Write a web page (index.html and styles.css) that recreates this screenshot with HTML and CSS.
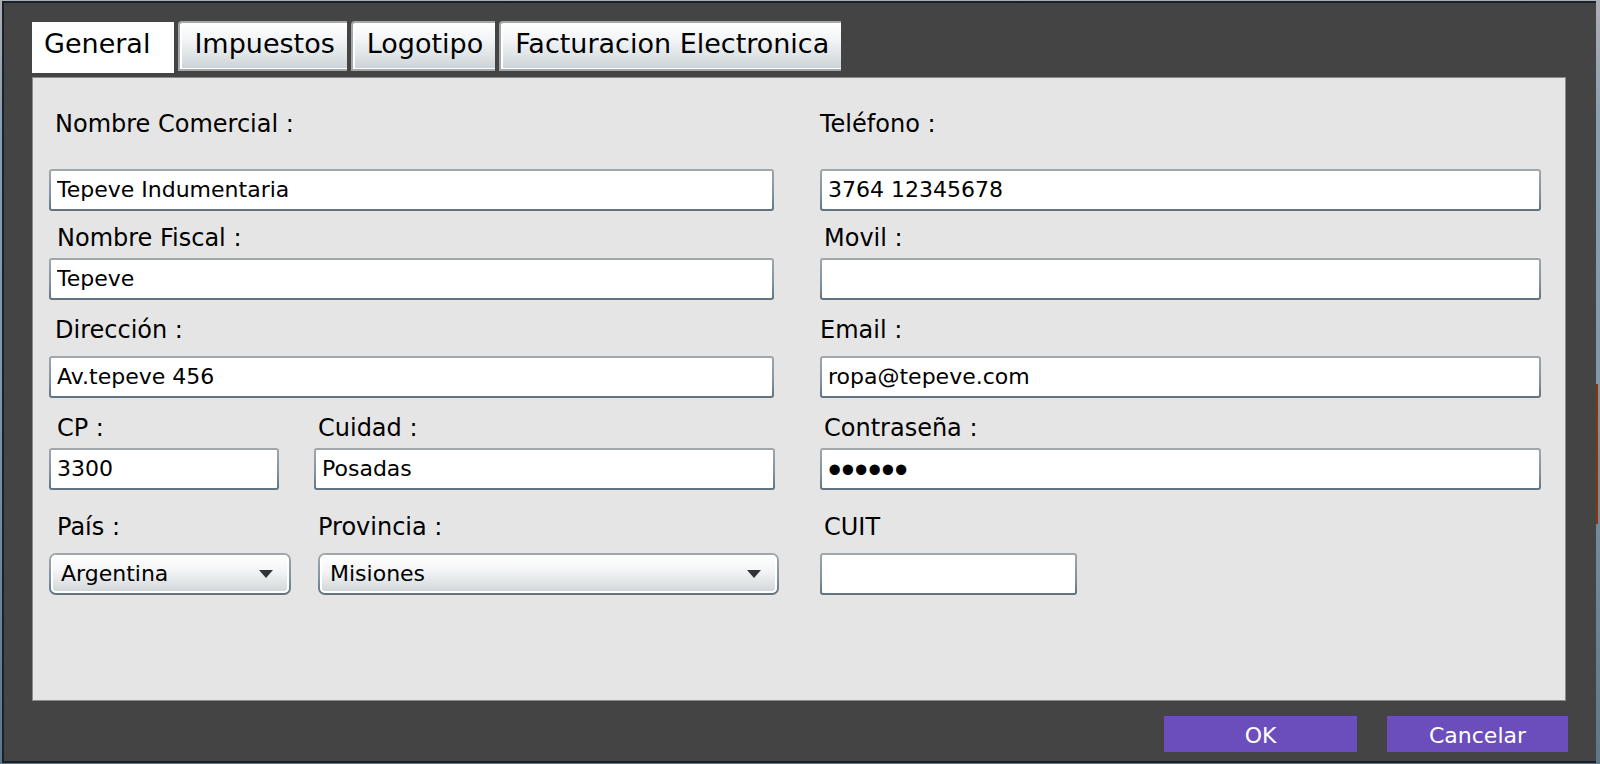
FILE: index.html
```html
<!DOCTYPE html>
<html lang="es">
<head>
<meta charset="utf-8">
<meta name="viewport" content="width=device-width, initial-scale=1">
<title>Datos de la empresa</title>
<link rel="stylesheet" href="styles.css">
</head>
<body class="desktop">
<main class="window">
  <nav class="tabs" role="tablist">
    <button class="tab tab-active" type="button" role="tab" aria-selected="true">General</button>
    <button class="tab" type="button" role="tab" aria-selected="false">Impuestos</button>
    <button class="tab" type="button" role="tab" aria-selected="false">Logotipo</button>
    <button class="tab" type="button" role="tab" aria-selected="false">Facturacion Electronica</button>
  </nav>
  <form class="form" id="company">
    <div class="row row-first">
      <div class="left single">
        <div class="field"><label class="label" for="comercial">Nombre Comercial :</label><input class="input" id="comercial" type="text" value="Tepeve Indumentaria"></div>
      </div>
      <div class="right">
        <div class="field"><label class="label" for="telefono">Teléfono :</label><input class="input" id="telefono" type="text" value="3764 12345678"></div>
      </div>
    </div>
    <div class="row row-fiscal">
      <div class="left single">
        <div class="field"><label class="label indented" for="fiscal">Nombre Fiscal :</label><input class="input" id="fiscal" type="text" value="Tepeve"></div>
      </div>
      <div class="right">
        <div class="field"><label class="label indented" for="movil">Movil :</label><input class="input" id="movil" type="text"></div>
      </div>
    </div>
    <div class="row row-address">
      <div class="left single">
        <div class="field"><label class="label" for="direccion">Dirección :</label><input class="input" id="direccion" type="text" value="Av.tepeve 456"></div>
      </div>
      <div class="right">
        <div class="field"><label class="label" for="email">Email :</label><input class="input" id="email" type="text" value="ropa@tepeve.com"></div>
      </div>
    </div>
    <div class="row row-city">
      <div class="left pair-inputs">
        <div class="field"><label class="label indented" for="cp">CP :</label><input class="input" id="cp" type="text" value="3300"></div>
        <div class="field second"><label class="label indented" for="ciudad">Cuidad :</label><input class="input" id="ciudad" type="text" value="Posadas"></div>
      </div>
      <div class="right">
        <div class="field"><label class="label indented" for="clave">Contraseña :</label><input class="input password" id="clave" type="password" value="123456"></div>
      </div>
    </div>
    <div class="row row-country">
      <div class="left pair-selects">
        <div class="field"><label class="label indented" for="pais">País :</label>
          <div class="combo"><select class="select" id="pais"><option>Argentina</option></select><svg class="arrow" viewBox="0 0 14 8" aria-hidden="true"><path d="M0 0H14L7 8Z"/></svg></div></div>
        <div class="field second"><label class="label" for="provincia">Provincia :</label>
          <div class="combo"><select class="select" id="provincia"><option>Misiones</option></select><svg class="arrow" viewBox="0 0 14 8" aria-hidden="true"><path d="M0 0H14L7 8Z"/></svg></div></div>
      </div>
      <div class="right short">
        <div class="field"><label class="label indented" for="cuit">CUIT</label><input class="input" id="cuit" type="text"></div>
      </div>
    </div>
  </form>
  <footer class="actions">
    <button class="action action-ok" type="submit" form="company">OK</button>
    <button class="action action-cancel" type="button">Cancelar</button>
  </footer>
</main>
</body>
</html>
```
FILE: styles.css
```css
* { box-sizing: border-box; }

body, button, input, select {
  font-family: Verdana, "DejaVu Sans", sans-serif;
  color: #000;
}

.desktop {
  margin: 0;
  min-height: 100vh;
  display: flex;
  padding: 1px 4px 1px 2px;
  background:
    linear-gradient(#8a3208, #8a3208) right 2px top 384px / 2px 140px no-repeat,
    linear-gradient(#b0aeb4, #8a9fb0 15%, #7f98aa 50%, #5f7686);
}

.window {
  flex: 1;
  display: flex;
  flex-direction: column;
  padding: 18px 30px 9px 28px;
  background: #444;
  border: 2px solid #17222b;
  border-right: 0;
}

.tabs {
  display: flex;
  align-items: flex-start;
  margin-bottom: 4px;
}

.tab {
  height: 50px;
  margin-right: 4px;
  padding: 0 12px 4px 14px;
  border: 2px solid #a3a8ab;
  border-right: 0;
  border-radius: 4px 0 0 0;
  background: linear-gradient(#fff, #f3f5f6 35%, #dfe4e7 70%, #cbd1d5);
  box-shadow: inset 2px 2px 0 #fff, inset 0 -1px 0 #fff;
  font-size: 27px;
  line-height: 28px;
  white-space: nowrap;
}

.tab-active {
  height: 51px;
  margin-top: 1px;
  padding: 0 24px 8px 12px;
  border: 0;
  border-radius: 0;
  background: #fff;
  box-shadow: none;
}

.form {
  flex: 1;
  padding: 32px 24px 30px 16px;
  border: 1px solid #8b8b8b;
  background: #e5e5e5;
}

.row {
  display: grid;
  grid-template-columns: 730fr 721fr;
  column-gap: 41px;
}

.row-fiscal { margin-top: 13px; }
.row-address { margin-top: 16px; }
.row-city { margin-top: 16px; }
.row-country { margin-top: 23px; }

.row-first .field { row-gap: 31px; }
.row-fiscal .field, .row-city .field { row-gap: 6px; }

.single { padding-right: 5px; }

.pair-inputs {
  display: grid;
  grid-template-columns: 230fr 461fr;
  column-gap: 35px;
  padding-right: 4px;
}

.pair-selects {
  display: grid;
  grid-template-columns: 242fr 461fr;
  column-gap: 27px;
}

.short { width: 257px; }

.field {
  display: flex;
  flex-direction: column;
  row-gap: 12px;
}

.label {
  padding-left: 6px;
  font-size: 24px;
  line-height: 28px;
  white-space: nowrap;
}

.left .indented { padding-left: 8px; }
.right .label, .second .label { padding-left: 0; }
.right .indented, .left .second .indented { padding-left: 4px; }

.input {
  width: 100%;
  height: 42px;
  padding: 0 6px 2px;
  border: 2px solid transparent;
  border-radius: 3px;
  background:
    linear-gradient(#fff, #fff) padding-box,
    linear-gradient(#a3a7aa, #7f93a3 60%, #5f7282) border-box;
  font-size: 22px;
}

.password {
  padding: 2px 6px 0;
  font-family: "Liberation Sans", Arial, sans-serif;
  font-size: 38px;
}

.combo {
  display: grid;
  align-items: center;
}

.select, .arrow { grid-area: 1 / 1; }

.select {
  width: 100%;
  height: 42px;
  padding: 0 36px 2px 10px;
  appearance: none;
  border: 2px solid transparent;
  border-radius: 7px;
  background:
    linear-gradient(#fff, #f4f5f6 40%, #dfe3e5 75%, #cdd3d6) padding-box,
    linear-gradient(#a3a7aa, #7f93a3 60%, #5f7282) border-box;
  box-shadow: inset 0 0 0 2px #fff;
  font-size: 22px;
}

.arrow {
  width: 14px;
  height: 8px;
  margin-right: 18px;
  justify-self: end;
  fill: #333;
  pointer-events: none;
}

.actions {
  display: flex;
  justify-content: flex-end;
  column-gap: 30px;
  margin: 15px -2px 0 0;
}

.action {
  height: 36px;
  padding: 2px 0 0;
  border: 0;
  background: #6b4dbc;
  color: #fff;
  font-size: 22px;
}

.action-ok { width: 193px; }
.action-cancel { width: 181px; }
```
